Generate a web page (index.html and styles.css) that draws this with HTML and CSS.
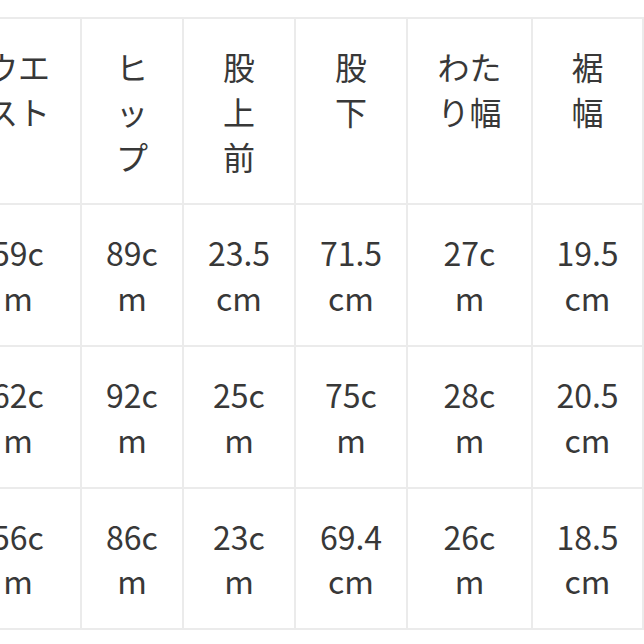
FILE: index.html
```html
<!DOCTYPE html>
<html lang="ja">
<head>
<meta charset="utf-8">
<link rel="stylesheet" href="styles.css">
</head>
<body>
<div class="viewport">
  <div class="size-table">
    <div class="cell head">ウエスト</div>
    <div class="cell head">ヒップ</div>
    <div class="cell head">股上前</div>
    <div class="cell head">股下</div>
    <div class="cell head">わたり幅</div>
    <div class="cell head">裾幅</div>

    <div class="cell">59cm</div>
    <div class="cell">89cm</div>
    <div class="cell">23.5cm</div>
    <div class="cell">71.5cm</div>
    <div class="cell">27cm</div>
    <div class="cell">19.5cm</div>

    <div class="cell">62cm</div>
    <div class="cell">92cm</div>
    <div class="cell">25cm</div>
    <div class="cell">75cm</div>
    <div class="cell">28cm</div>
    <div class="cell">20.5cm</div>

    <div class="cell">56cm</div>
    <div class="cell">86cm</div>
    <div class="cell">23cm</div>
    <div class="cell">69.4cm</div>
    <div class="cell">26cm</div>
    <div class="cell">18.5cm</div>
  </div>
</div>
</body>
</html>
```
FILE: styles.css
```css
html, body {
  margin: 0;
  padding: 0;
  background: #ffffff;
}

.viewport {
  width: 644px;
  height: 644px;
  overflow: hidden;
  padding-top: 17px;
  box-sizing: border-box;
}

.size-table {
  display: grid;
  grid-template-columns: 124px 100px 110px 110px 123px 109px;
  gap: 2px;
  padding: 2px;
  width: 690px;
  box-sizing: border-box;
  margin-left: -46px;
  background: #ebebeb;
  font-family: "Noto Sans CJK JP", "Noto Sans", sans-serif;
  font-size: 32px;
  line-height: 1.4;
  color: #383838;
}

.cell {
  background: #ffffff;
  padding: 25px 23.25px;
  text-align: center;
  word-break: break-all;
  overflow-wrap: anywhere;
}
```
